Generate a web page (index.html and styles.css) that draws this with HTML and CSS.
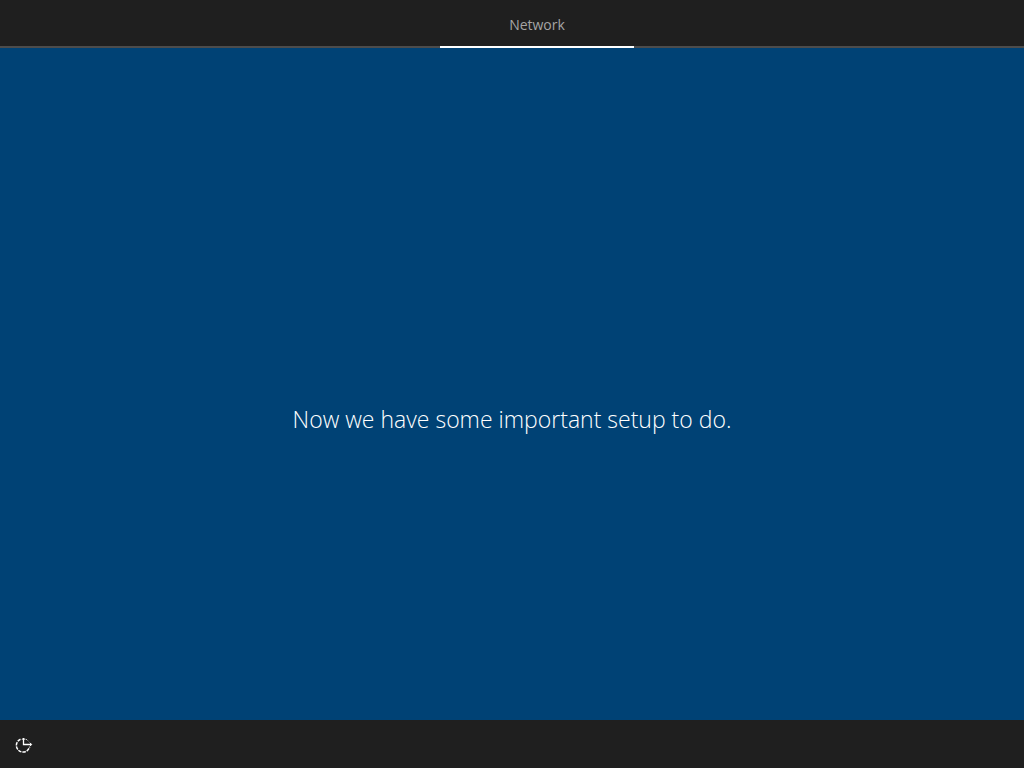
FILE: index.html
```
<!DOCTYPE html>
<html lang="en">
<head>
    <meta charset="UTF-8">
    <meta name="viewport" content="width=device-width, initial-scale=1.0">
    <title>Network</title>
    <link rel="stylesheet" href="styles.css">
</head>
<body>
    <header class="header">
        <nav class="tabs">
            <a href="#network" class="tab active">Network</a>
        </nav>
    </header>

    <main class="content" id="network">
        <h1 class="message">Now we have some important setup to do.</h1>
    </main>

    <footer class="footer">
        <button type="button" class="access-btn" aria-label="Ease of Access">
            <svg width="18" height="16" viewBox="0 0 18 16" fill="none" stroke="currentColor">
                <path d="M5.5 2.2A6.7 6.7 0 1 0 14.6 9.8" stroke-width="1.5" stroke-dasharray="3.4 1"/>
                <path d="M10.8 2.2A6.3 6.3 0 0 1 13.4 4.2" stroke-width="1" stroke-dasharray="1.5 1"/>
                <path d="M8.5 1V7.5H16.5" stroke-width="1.3"/>
                <path d="M7 2.8L8.5 1L10 2.8M14.8 5.7L16.6 7.5L14.8 9.3" stroke-width="1"/>
            </svg>
        </button>
    </footer>
</body>
</html>
```

FILE: styles.css
```
* {
    box-sizing: border-box;
}
body {
    display: flex;
    flex-direction: column;
    min-height: 100vh;
    margin: 0;
    font-family: "Segoe UI", "Open Sans", sans-serif;
    background-color: #004275;
    color: white;
}
.header {
    background-color: #1f1f1f;
    box-shadow: inset 0 -2px #4c4c4c;
}
.tabs {
    display: flex;
    justify-content: center;
    padding-left: 50px;
}
.tab {
    width: 194px;
    height: 48px;
    border-bottom: 2px solid transparent;
    font-size: 14px;
    line-height: 50px;
    text-align: center;
    text-decoration: none;
    color: #a5a5a5;
}
.tab.active {
    border-bottom-color: white;
}
.content {
    flex: 1;
    display: flex;
    align-items: center;
    justify-content: center;
    padding-top: 70px;
}
.message {
    margin: 0;
    font-size: 23px;
    font-weight: 300;
    line-height: 32px;
    text-align: center;
}
.footer {
    display: flex;
    align-items: center;
    height: 48px;
    background-color: #1f1f1f;
}
.access-btn {
    display: flex;
    align-items: center;
    justify-content: center;
    width: 48px;
    height: 48px;
    padding: 2px 0 0;
    border: none;
    background: none;
    color: white;
    cursor: pointer;
}
```
